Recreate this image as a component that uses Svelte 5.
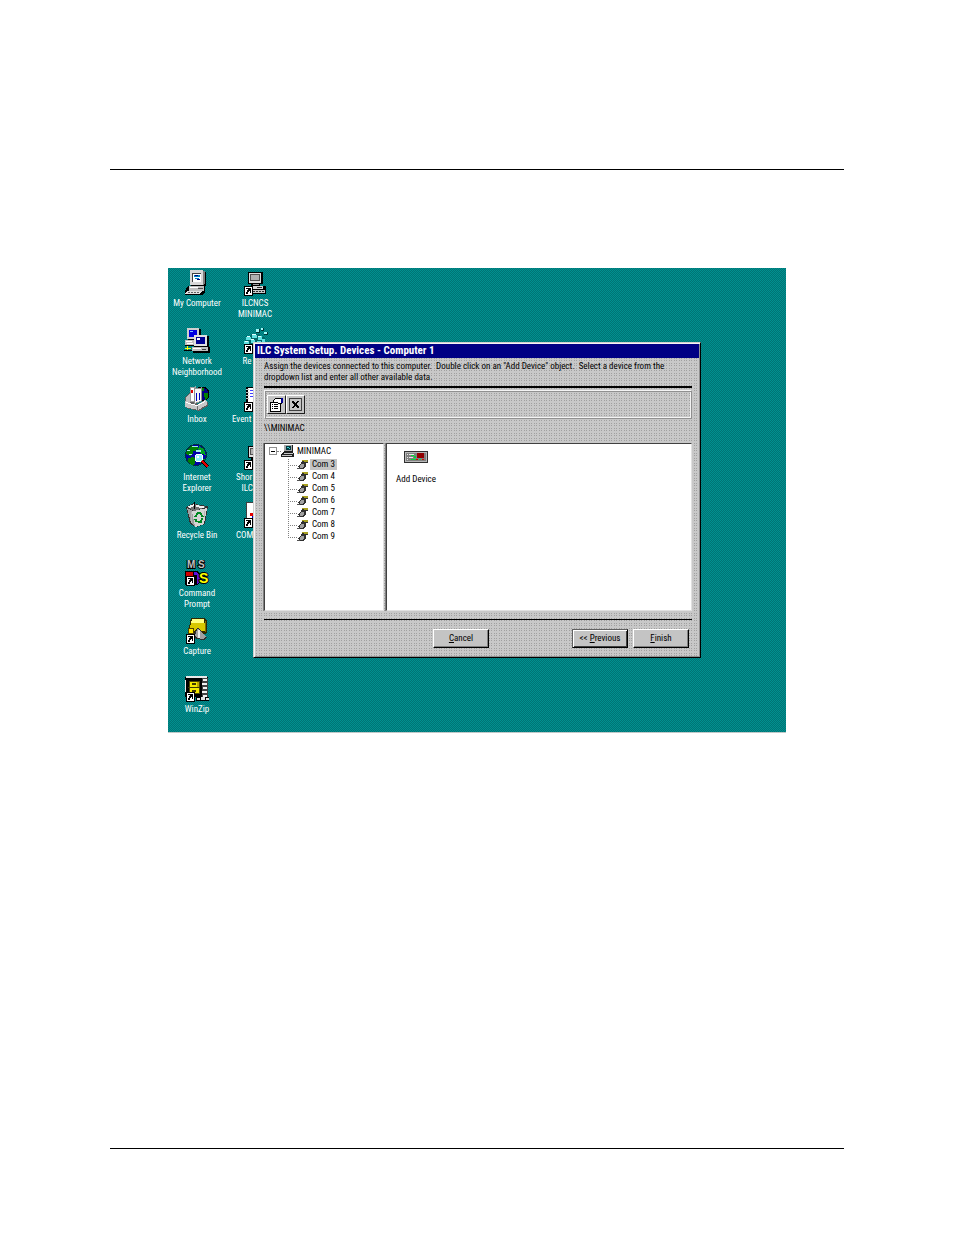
<script lang="ts">
  type Line = { text: string; width?: number };
  type Item = { icon: string; lines: Line[] };

  const left: Item[] = [
    { icon: "computer", lines: [{ text: "My Computer" }] },
    { icon: "network", lines: [{ text: "Network" }, { text: "Neighborhood" }] },
    { icon: "inbox", lines: [{ text: "Inbox" }] },
    { icon: "internet", lines: [{ text: "Internet" }, { text: "Explorer" }] },
    { icon: "recycle", lines: [{ text: "Recycle Bin" }] },
    { icon: "dos", lines: [{ text: "Command" }, { text: "Prompt" }] },
    { icon: "capture", lines: [{ text: "Capture" }] },
    { icon: "zip", lines: [{ text: "WinZip" }] },
  ];

  // labels that run under the wizard keep the width of the full name
  const right: Item[] = [
    { icon: "terminal", lines: [{ text: "ILCNCS" }, { text: "MINIMAC" }] },
    { icon: "registry", lines: [{ text: "Re", width: 25 }] },
    { icon: "events", lines: [{ text: "Event", width: 46 }] },
    { icon: "terminal", lines: [{ text: "Shor", width: 38 }, { text: "ILC", width: 27 }] },
    { icon: "document", lines: [{ text: "COM", width: 38 }] },
  ];

  const ports = [3, 4, 5, 6, 7, 8, 9];
  let selected = $state(3);
</script>

{#snippet arrow()}
  <rect x="2" y="16" width="8" height="9" fill="#fff" stroke="#000" />
  <path d="M4 24v-2h1v-2h1v-1H4v-1h5v5H8v-2H7v1H6v2z" fill="#000" />
{/snippet}

{#snippet icon(name: string)}
  <svg viewBox="0 0 26 26" width="26" height="26" shape-rendering="crispEdges" aria-hidden="true">
    {#if name === "computer"}
      <path d="M7 1h13l2 2v12l-2 2H7z" fill="#000" />
      <path d="M6 0h13v15H6z" fill="#d8d8d8" />
      <path d="M19 1h2v12l-2 2z" fill="#808080" />
      <path d="M8 3h9v9H8z" fill="#fff" />
      <path d="M8 3h9v1H9v8H8z" fill="#404040" />
      <path d="M10 5h6v2h-6zM11 8h4v1h-4z" fill="#0080c0" />
      <path d="M11 5h3v1h-3zM13 9h3v1h-3z" fill="#000080" />
      <path d="M4 16h17v6l-3 3H1v-4z" fill="#000" />
      <path d="M5 16h15v5H5z" fill="#c0c0c0" />
      <path d="M6 17h8v1H6z" fill="#fff" />
      <path d="M14 18h5v1h-5z" fill="#505050" />
      <path d="M3 21h15l-2 3H1z" fill="#e0e0e0" />
      <path d="M4 22h2v1H4zM7 22h2v1H7zM10 22h2v1h-2zM13 22h2v1h-2z" fill="#606060" />
    {:else if name === "network"}
      <path d="M4 1h13v12H4zM1 12h15v6H1z" fill="#000" />
      <path d="M3 0h12v11H3z" fill="#d0d0d0" />
      <path d="M5 2h8v7H5z" fill="#0000e0" />
      <path d="M6 3h3v1H6z" fill="#80c0ff" />
      <path d="M1 12h13v5H1z" fill="#c0c0c0" />
      <path d="M2 13h6v1H2zM3 15h6v1H3z" fill="#fff" />
      <path d="M10 8h15v11h1v6H9v-6h1z" fill="#000" />
      <path d="M10 7h13v11H10z" fill="#e0e0e0" />
      <path d="M12 9h9v7h-9z" fill="#000090" />
      <path d="M13 10h3v2h-3z" fill="#fff" />
      <path d="M8 19h16v4H8z" fill="#c0c0c0" />
      <path d="M9 20h8v1H9z" fill="#fff" />
      <path d="M18 21h4v1h-4z" fill="#404040" />
      <path d="M1 20h6v1H1zM3 18h1v5H3z" fill="#ffff00" />
      <path d="M0 22h8v1H0z" fill="#000" />
    {:else if name === "inbox"}
      <circle cx="18" cy="8" r="7" fill="#000080" stroke="#000" />
      <path d="M16 2h4v3h-3zM20 7h4v4l-3 3zM15 5h3v4h-3z" fill="#008000" />
      <path d="M1 12l5-6h3v9l5 3 7-4 3 2v4l-9 5-13-3z" fill="#606060" />
      <path d="M2 12l4-5v12l-5-1z" fill="#c0c0c0" />
      <path d="M6 2l5-1v14l-5 1z" fill="#fff" stroke="#a0a0a0" />
      <path d="M10 3l7-1v13l-7 3z" fill="#f4f4f4" stroke="#909090" />
      <path d="M7 4h2v3H7z" fill="#e00000" />
      <path d="M12 7h1v8h-1zM15 7h1v7h-1z" fill="#0000c0" />
      <path d="M1 16l12 3 8-5 2 2v3l-9 5-13-3z" fill="#c8c8c8" />
      <path d="M2 16l11 3 8-4v1l-8 4-11-3z" fill="#fff" />
      <path d="M13 20h1v4h-1z" fill="#707070" />
    {:else if name === "internet"}
      <circle cx="12" cy="11" r="11" fill="#003040" />
      <circle cx="12" cy="11" r="10" fill="#0000a8" />
      <path d="M3 6l4-4h5l2 2-3 3H9v3l-3 2-4-2zM4 14l5-1 3 3-2 5H7l-3-4z" fill="#008000" />
      <path d="M15 2l5 3 2 6-4-1-4-3zM18 15h3l-3 4h-2z" fill="#00a020" />
      <path d="M8 2h6v1H8zM3 6h3v1H3zM12 6h5v2h-5zM5 10h3v1H5z" fill="#a0e8e8" />
      <circle cx="15" cy="14" r="4" fill="#90f0ff" stroke="#fff" />
      <path d="M18 17l6 6" stroke="#000" stroke-width="4" />
      <path d="M18 17l6 6" stroke="#e00000" stroke-width="2" />
      <path d="M13 12h2v2h-2z" fill="#fff" />
    {:else if name === "recycle"}
      <path d="M2 5l8-4 5 2 9 1-3 18-9 3-6-3z" fill="#303030" />
      <path d="M3 6l6 3 2 15-4-3z" fill="#a0a0a0" />
      <path d="M8 9l15-3-3 16-9 3z" fill="#d4d4d4" />
      <path d="M3 5l7-3 13 3-13 4z" fill="#707070" />
      <path d="M3 5l7-3v2L6 6zM12 3l10 2-4 1-6-1z" fill="#f0f0f0" />
      <path d="M10 0h1v7h-1z" fill="#000" />
      <path d="M11 15l3-4h2l3 4M18 16l-1 4h-3M13 20l-2-3" fill="none" stroke="#008820" stroke-width="2" />
      <path d="M7 10h1v11H7zM20 9h1v6h-1z" fill="#b8b8b8" />
    {:else if name === "dos"}
      <path d="M1 11h11v14H1z" fill="#000" />
      <path d="M2 12h9v12H2z" fill="#d00000" />
      <path d="M9 11h4l4 4v6l-4 4H9z" fill="#000" />
      <path d="M10 12h3l3 4v5l-3 3v-9h-3z" fill="#6010e0" />
      <g class="dos" shape-rendering="auto">
        <text x="3" y="8" fill="#c0c0c0">M</text>
        <text x="14" y="8" fill="#c0c0c0">S</text>
        <text class="big" x="15" y="23" fill="#ffff00">S</text>
      </g>
      {@render arrow()}
    {:else if name === "capture"}
      <path d="M7 0h14l2 3v12l-2 1H5v-6z" fill="#302800" />
      <path d="M8 1h12v4H7z" fill="#ffff80" />
      <path d="M7 5h14v8h-4l-3-4-4 4H5z" fill="#d8c800" />
      <path d="M21 2l1 2v10h-1z" fill="#807000" />
      <path d="M14 9l9 11-3 2-8-1-3-3z" fill="#303030" />
      <path d="M14 10l8 9-3 2-6-1-2-3z" fill="#a0a0a0" />
      <path d="M14 12h2v8h-2z" fill="#e8e8e8" />
      <circle cx="7" cy="13" r="3" fill="#ffe800" stroke="#504000" />
      {@render arrow()}
    {:else if name === "zip"}
      <path d="M1 1h23v3h-5v17H1z" fill="#000" />
      <path d="M2 0h21v2H2zM1 4h1v12H1z" fill="#e8e8e8" />
      <path d="M5 5h10v12H5z" fill="#f4e800" stroke="#504800" />
      <path d="M4 11h12v1H4zM8 7h4v2H8zM8 14h4v2H8z" fill="#403800" />
      <path d="M13 6h2v5h-2z" fill="#c0a800" />
      <path d="M18 2h6v22h-6z" fill="#404040" />
      <path d="M19 3h4v2h-4zM18 7h5v2h-5zM19 11h4v2h-4zM18 15h5v2h-5zM19 19h4v2h-4z" fill="#f0f0f0" />
      <path d="M12 21h13v4H12z" fill="#000" />
      <path d="M13 22h3v2h-3zM17 21h4v3h-4zM22 22h3v2h-3z" fill="#e0e0e0" />
      {@render arrow()}
    {:else if name === "terminal"}
      <path d="M6 2h15v12h-3v2h6v8H2v-8h7v-2H6z" fill="#000" />
      <path d="M7 3h12v10H7z" fill="#e0e0e0" />
      <path d="M8 4h10v7H8z" fill="#505050" />
      <path d="M9 5h8v5H9z" fill="#b0b0b0" />
      <path d="M11 14h6v1h-6z" fill="#a0a0a0" />
      <path d="M6 16h15v3H6z" fill="#d8d8d8" />
      <path d="M15 17h5v1h-5z" fill="#303030" />
      <path d="M10 20h13v3H10z" fill="#c8c8c8" />
      <path d="M11 21h2v1h-2zM14 21h2v1h-2zM17 21h2v1h-2zM20 21h2v1h-2z" fill="#303030" />
      {@render arrow()}
    {:else if name === "registry"}
      <path d="M4 8h5V6h9v3h5v13H3V12h1z" fill="#006868" />
      <path d="M4 9h5v3H4zM10 7h5v3h-5zM16 8h4v4h-4zM2 13h5v4H2zM9 12h4v3H9zM15 13h4v4h-4zM20 11h3v4h-3z" fill="#60e0e0" />
      <path d="M5 8h3v1H5zM10 6h4v1h-4zM9 11h3v1H9zM16 8h3v1h-3zM3 13h3v1H3z" fill="#e0ffff" />
      <path d="M14 1h4v4h-4zM19 0h3v3h-3zM22 4h4v3h-4z" fill="#003838" />
      <path d="M14 1h3v3h-3zM19 0h2v2h-2zM22 4h3v2h-3z" fill="#a0f8f8" />
      {@render arrow()}
    {:else if name === "events"}
      <path d="M4 1h20v24H4z" fill="#000" />
      <path d="M6 2h17v21H6z" fill="#fff" />
      <path d="M8 4h3v1H8zM8 7h3v1H8zM8 10h3v1H8z" fill="#4040ff" />
      <path d="M11 2h3v20h-3z" fill="#ffff40" />
      <path d="M4 3h3v1H4zM4 6h3v1H4zM4 9h3v1H4zM4 12h3v1H4z" fill="#c0c0c0" />
      {@render arrow()}
    {:else}
      <path d="M4 0h18v25H4z" fill="#404040" />
      <path d="M5 1h16v23H5z" fill="#fff" />
      <path d="M8 11h3v3H8z" fill="#e00000" />
      <path d="M10 14h3v2h-3z" fill="#0000c0" />
      {@render arrow()}
    {/if}
  </svg>
{/snippet}

{#snippet shortcuts(items: Item[])}
  <ul class="shortcuts">
    {#each items as item}
      <li>
        {@render icon(item.icon)}
        {#each item.lines as line}
          {#if line.width}
            <span style:width="{line.width}px">{line.text}</span>
          {:else}
            <span>{line.text}</span>
          {/if}
        {/each}
      </li>
    {/each}
  </ul>
{/snippet}

<div class="page">
  <hr />
  <main class="desktop">
    {@render shortcuts(left)}
    {@render shortcuts(right)}

    <section class="window" aria-labelledby="title">
      <h1 id="title">ILC System Setup. Devices - Computer 1</h1>
      <div class="body">
        <p class="help">Assign the devices connected to this computer.&nbsp; Double click on an "Add Device" object.&nbsp; Select a device from the dropdown list and enter all other available data.</p>
        <div class="rule thick"></div>

        <div class="toolbar">
          <button aria-label="Properties">
            <svg viewBox="0 0 17 17" width="17" height="17" shape-rendering="crispEdges">
              <path d="M2 6h10v9H2z" fill="#fff" stroke="#000" />
              <path d="M4 8h1v1H4zM6 8h4v1H6zM4 10h1v1H4zM6 10h4v1H6zM4 12h1v1H4zM6 12h4v1H6z" fill="#000" />
              <path d="M5 5l3-3h4l2 2v3l-3 1-2-2-2 1z" fill="#fff" stroke="#000" />
              <path d="M13 2h2v5h-2z" fill="#000090" />
            </svg>
          </button>
          <button aria-label="Delete">
            <svg viewBox="0 0 17 17" width="17" height="17" shape-rendering="crispEdges">
              <path d="M2 2h12v12H2z" fill="none" stroke="#404040" />
              <path d="M5 5h2v1h1v1h1V6h1V5h2v1h-1v1h-1v2h1v1h1v2h-2v-1H9v-1H8v1H7v1H5v-1h1v-1h1V8H6V7H5z" fill="#000" />
            </svg>
          </button>
        </div>

        <p class="path">\\MINIMAC</p>

        <div class="panes">
          <div class="pane">
            <div class="root">
              <button class="expander" aria-label="Collapse"></button>
              <i></i>
              <svg viewBox="0 0 14 14" width="14" height="14" shape-rendering="crispEdges" aria-hidden="true">
                <path d="M3 1h9v7l1 2v3H0v-3l3-2z" fill="#202020" />
                <path d="M3 1h8v6H3z" fill="#a8a8a8" />
                <path d="M5 2h5v4H5z" fill="#003840" />
                <path d="M6 3h2v1H6zM8 4h1v1H8z" fill="#40d0d0" />
                <path d="M3 9h9v1H3zM1 11h10v1H1z" fill="#c8c8c8" />
              </svg>
              <span>MINIMAC</span>
            </div>
            <ul class="ports">
              {#each ports as port}
                <li>
                  <svg viewBox="0 0 12 12" width="12" height="12" shape-rendering="crispEdges" aria-hidden="true">
                    <path d="M5 2h6v2H9v3l-3 3H3L1 8l3-4z" fill="#303030" />
                    <path d="M5 1h6v2H7V2H5z" fill="#a8a020" />
                    <path d="M4 5h3v2L5 9H3V7z" fill="#a0a0a0" />
                    <path d="M0 9h3v1H0z" fill="#505050" />
                  </svg>
                  <button class:selected={selected === port} onclick={() => (selected = port)}>Com {port}</button>
                </li>
              {/each}
            </ul>
          </div>
          <div class="pane">
            <div class="device">
              <svg viewBox="0 0 24 14" width="24" height="14" shape-rendering="crispEdges" aria-hidden="true">
                <path d="M0 1h24v12H0z" fill="#303030" />
                <path d="M1 2h22v10H1z" fill="#b8b8b8" />
                <path d="M2 3h20v8H2z" fill="#808080" />
                <path d="M3 4h1v1H3zM5 4h5v1H5zM3 7h1v1H3zM5 7h4v1H5zM3 9h1v1H3z" fill="#e8e8e8" />
                <path d="M7 5h3v1H7zM7 9h5v1H7zM10 6h2v2h-2z" fill="#00d838" />
                <path d="M13 3h7v5h-7z" fill="#900000" />
                <path d="M12 9h2v1h-2zM18 9h2v1h-2z" fill="#e00000" />
                <path d="M15 9h2v1h-2z" fill="#00e040" />
              </svg>
              <span>Add Device</span>
            </div>
          </div>
        </div>

        <div class="rule"></div>
        <div class="actions">
          <button class="cancel"><u>C</u>ancel</button>
          <button class="default">&lt;&lt; <u>P</u>revious</button>
          <button><u>F</u>inish</button>
        </div>
      </div>
    </section>
  </main>
  <hr class="foot" />
</div>

<style>
  :global(body) {
    margin: 0;
    background: #fff;
  }

  .page {
    --dots:
      repeating-linear-gradient(90deg, transparent 0 1px, #c8c8c8 1px 2px, transparent 2px 3px, #c8c8c8 3px 5px),
      repeating-linear-gradient(#a0a0a0 0 1px, #c8c8c8 1px 2px, #a0a0a0 2px 3px, #c8c8c8 3px 5px);
    box-sizing: border-box;
    display: flex;
    flex-direction: column;
    min-height: 100vh;
    padding: 169px 110px 86px;
    font: 9px/11px "Roboto Condensed", Roboto, "Liberation Sans", sans-serif;
    color: #000;
  }

  hr {
    width: 100%;
    height: 1px;
    margin: 0;
    border: 0;
    background: #000;
  }

  .foot {
    margin-top: auto;
  }

  ul,
  p,
  h1 {
    margin: 0;
    padding: 0;
    list-style: none;
  }

  button {
    padding: 0;
    border: 0;
    background: none;
    color: inherit;
    font: inherit;
  }

  svg {
    display: block;
    flex: none;
  }

  .desktop {
    position: relative;
    display: flex;
    margin: 98px 58px 0;
    border-bottom: 1px solid #c0c8c8;
    background: repeating-conic-gradient(#007474 0 25%, #009090 0 50%) 0 0 / 2px 2px;
  }

  .shortcuts {
    display: grid;
    grid-template-columns: 58px;
    grid-auto-rows: 58px;
    color: #fff;
  }

  .shortcuts li {
    display: flex;
    flex-direction: column;
    align-items: center;
    padding-top: 2px;
    white-space: nowrap;
  }

  .shortcuts svg {
    margin-bottom: 2px;
  }

  .dos {
    font: bold 10px "Liberation Sans", sans-serif;
    stroke: #000;
    stroke-width: 2px;
    paint-order: stroke;
  }

  .dos .big {
    font-size: 14px;
  }

  .window {
    position: absolute;
    top: 74px;
    left: 85px;
    right: 85px;
    padding: 1px;
    border: 1px solid;
    border-color: #d0d0d0 #000 #000 #d0d0d0;
    background: var(--dots);
    box-shadow:
      inset 1px 1px #f4f4f4,
      inset -1px -1px #909090;
  }

  h1 {
    height: 14px;
    padding-left: 2px;
    background: #000084;
    color: #fff;
    font-size: 11px;
    line-height: 14px;
  }

  .body {
    padding: 3px 7px 8px 9px;
  }

  .help {
    padding-right: 4px;
  }

  .rule {
    height: 1px;
    margin-top: 8px;
    background: #000;
  }

  .thick {
    height: 2px;
    margin-top: 3px;
  }

  .toolbar {
    display: flex;
    margin-top: 2px;
    padding: 4px 2px;
    border: 1px solid;
    border-color: #f4f4f4 #909090 #909090 #f4f4f4;
    box-shadow:
      inset 1px 1px #909090,
      inset -1px -1px #f4f4f4;
  }

  .toolbar button {
    border: 1px solid;
    border-color: #fff #202020 #202020 #fff;
    background: #c4c4c4;
  }

  .path {
    margin-top: 4px;
  }

  .panes {
    display: grid;
    grid-template-columns: 120px 1fr;
    gap: 2px;
    margin-top: 9px;
  }

  .pane {
    box-sizing: border-box;
    min-height: 168px;
    border: 1px solid;
    border-color: #404040 #e0e0e0 #e0e0e0 #404040;
    background: #fff;
    box-shadow: -1px 0 #808080;
  }

  .root {
    display: flex;
    align-items: center;
    height: 14px;
    padding-left: 4px;
  }

  .root i {
    width: 4px;
    border-top: 1px dotted #808080;
  }

  .root span {
    margin-left: 2px;
  }

  .expander {
    width: 8px;
    height: 8px;
    border: 1px solid #909090;
    background: linear-gradient(#000, #000) center / 4px 1px no-repeat;
  }

  .ports {
    padding: 1px 0 0 23px;
  }

  .ports li {
    display: flex;
    height: 12px;
  }

  .ports li::before {
    content: "";
    width: 9px;
    background:
      repeating-linear-gradient(#808080 0 1px, transparent 1px 2px) 0 0 / 1px 100% no-repeat,
      repeating-linear-gradient(90deg, #808080 0 1px, transparent 1px 2px) 0 6px / 100% 1px no-repeat;
  }

  .ports li:last-child::before {
    height: 7px;
  }

  .ports button {
    height: 11px;
    margin-left: 1px;
    padding: 0 2px;
  }

  .ports .selected {
    background: #c4c4c4;
  }

  .device {
    display: flex;
    flex-direction: column;
    align-items: center;
    gap: 10px;
    width: 58px;
    padding-top: 6px;
  }

  .actions {
    display: flex;
    justify-content: flex-end;
    gap: 5px;
    margin-top: 9px;
    padding-right: 3px;
  }

  .actions button {
    width: 56px;
    height: 19px;
    border: 1px solid;
    border-color: #fff #000 #000 #fff;
    background: #c4c4c4;
    box-shadow: inset -1px -1px #808080;
  }

  .actions .cancel {
    margin-right: 78px;
  }

  .actions .default {
    border-color: #606060 #000 #000 #606060;
    box-shadow:
      inset 1px 1px #fff,
      inset -1px -1px #404040;
  }
</style>
